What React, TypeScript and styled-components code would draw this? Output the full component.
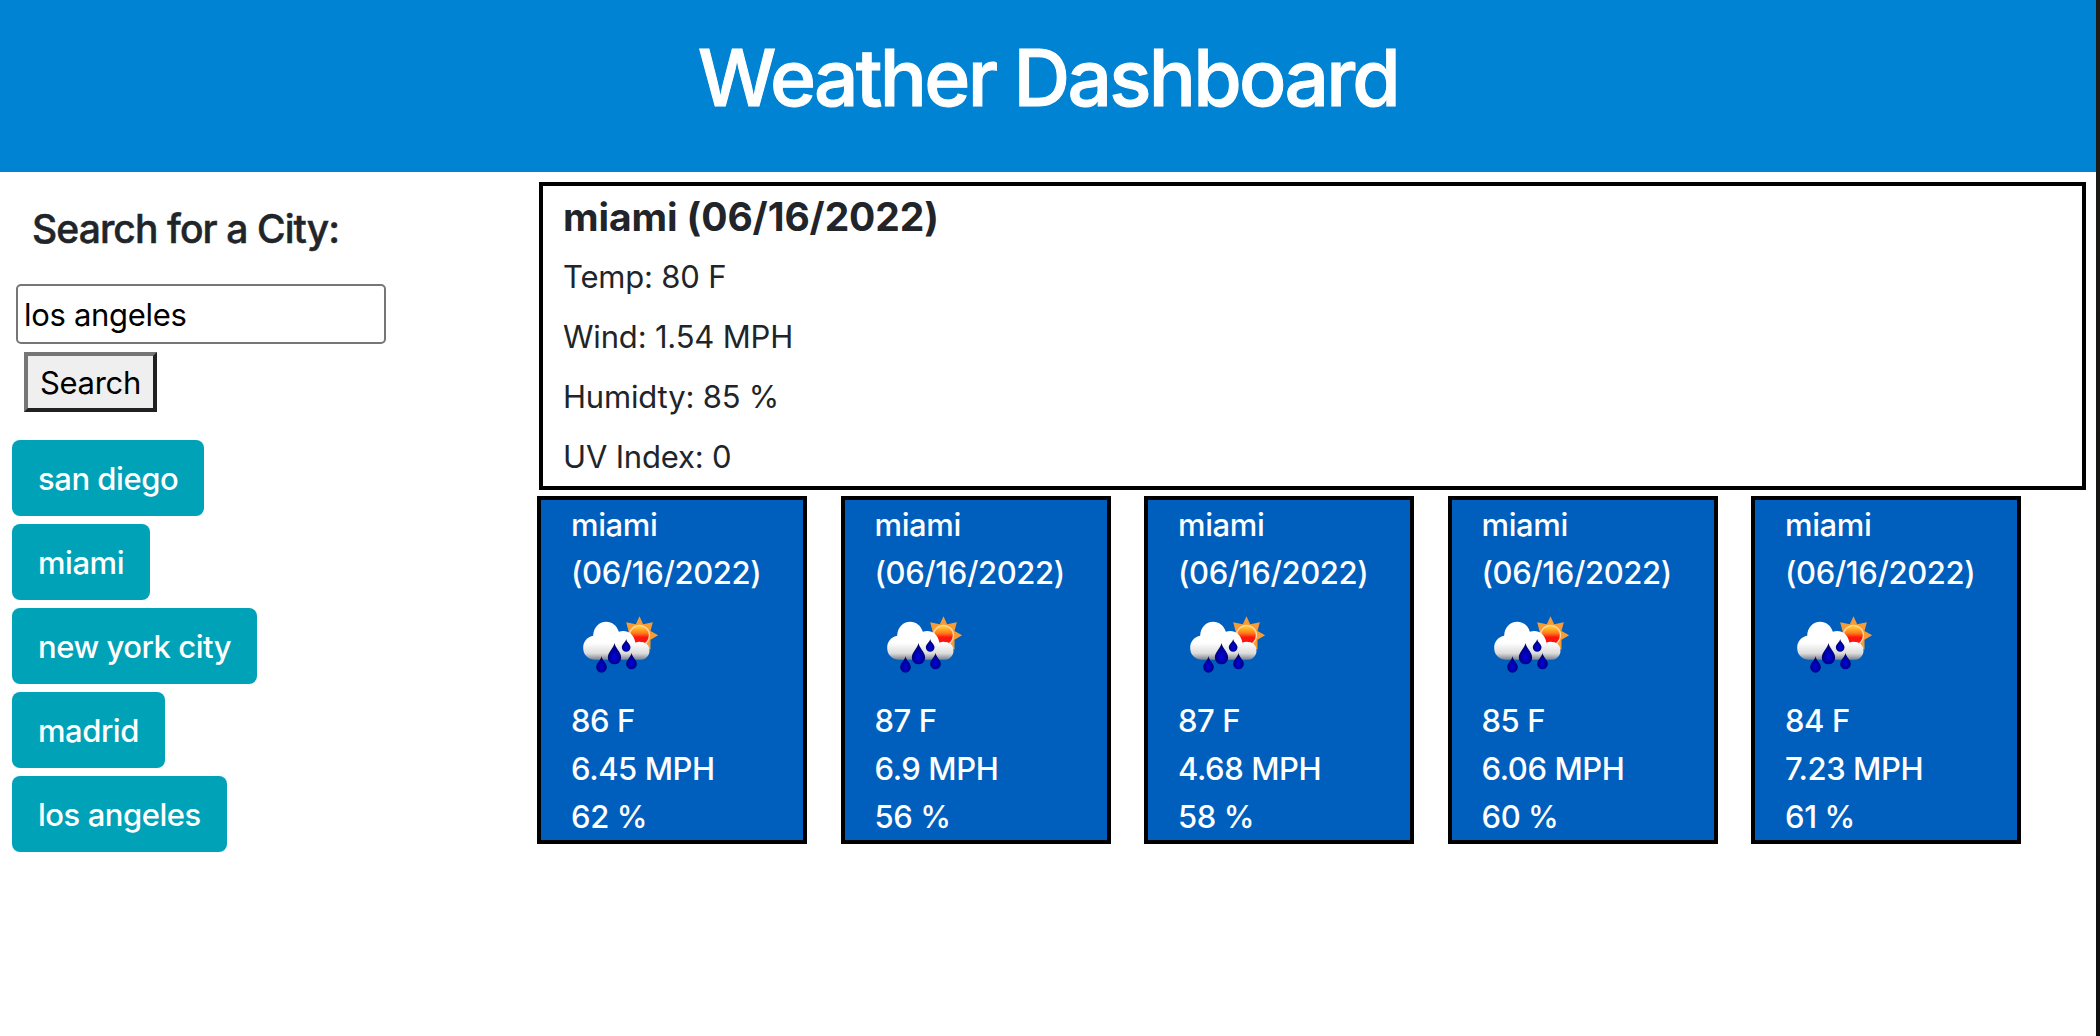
import React, { useState } from 'react';
import styled, { createGlobalStyle } from 'styled-components';

const GlobalStyle = createGlobalStyle`
  *, *::before, *::after { box-sizing: border-box; }
  body {
    margin: 0;
    background: #fff;
    color: #212529;
    font-family: Inter, "Liberation Sans", sans-serif;
    font-size: 31px;
    line-height: 48px;
  }
`;

const Screen = styled.div`
  display: flex;
  height: 1036px;
  overflow: hidden;
`;

const Page = styled.div`
  flex: 1;
  min-width: 0;
`;

const WindowEdge = styled.div`
  width: 4px;
  background: linear-gradient(#1f1c18, #151515 60%, #101010);
`;

const Header = styled.header`
  height: 172px;
  padding-top: 30px;
  background: #0083d3;
  color: #fff;
  text-align: center;
`;

const Title = styled.h1`
  margin: 0;
  font-size: 78.5px;
  font-weight: 500;
  line-height: 96px;
  letter-spacing: -2.75px;
  -webkit-text-stroke: 1px currentColor;
`;

const Columns = styled.div`
  display: flex;
`;

const Sidebar = styled.aside`
  width: 537px;
  padding: 32px 12px 0;
`;

const SearchForm = styled.form`
  display: flex;
  flex-direction: column;
  align-items: flex-start;
`;

const SearchLabel = styled.label`
  margin: 0 0 30px 20px;
  font-size: 39px;
  font-weight: 500;
  line-height: 50px;
  letter-spacing: -0.9px;
  -webkit-text-stroke: 0.5px currentColor;
`;

const CityInput = styled.input`
  width: 370px;
  height: 60px;
  margin-left: 4px;
  padding: 3px 6px 2px;
  border: 2px solid #767676;
  border-radius: 5px;
  outline: none;
  color: #000;
  font: inherit;
  letter-spacing: -0.3px;
`;

const SearchButton = styled.button`
  width: 133px;
  height: 60px;
  margin: 8px 0 0 12px;
  padding: 2px 0 0;
  border: 4px solid;
  border-color: #767676 #212121 #212121 #767676;
  background: #efefef;
  color: #000;
  font: inherit;
  letter-spacing: -0.3px;
`;

const History = styled.div`
  display: flex;
  flex-direction: column;
  align-items: flex-start;
  gap: 8px;
  margin-top: 28px;
`;

const CityButton = styled.button`
  height: 76px;
  padding: 2px 26px 0;
  border: 0;
  border-radius: 8px;
  background: #00a2b8;
  color: #fff;
  font: inherit;
  font-weight: 500;
  letter-spacing: -0.46px;
`;

const Main = styled.main`
  flex: 1;
  padding-top: 10px;
`;

const Current = styled.section`
  height: 308px;
  margin: 0 10px 6px 2px;
  padding: 3px 20px 0;
  border: 4px solid #000;
`;

const CurrentTitle = styled.h2`
  margin: 0 0 8px;
  font-size: 39px;
  font-weight: 700;
  line-height: 56px;
  letter-spacing: -0.1px;
`;

const Reading = styled.p`
  margin: 0 0 12px;
  letter-spacing: -0.18px;
`;

const Forecast = styled.section`
  display: flex;
  gap: 33.5px;
`;

const DayCard = styled.article`
  width: 270px;
  height: 348px;
  padding: 1px 0 0 30px;
  border: 4px solid #000;
  background: #005ebd;
  color: #fff;
  font-weight: 500;
  letter-spacing: -0.4px;
`;

const DayIcon = styled.svg`
  display: block;
  width: 100px;
  height: 100px;
`;

function RainIcon({ id }: { id: number }) {
  return (
    <DayIcon viewBox="0 0 100 100">
      <defs>
        <linearGradient id={`sun${id}`} x1="0" y1="0" x2="0" y2="1">
          <stop offset="0.08" stopColor="#ffc933" />
          <stop offset="0.4" stopColor="#ff7818" />
          <stop offset="0.6" stopColor="#fb1710" />
          <stop offset="1" stopColor="#ff0d0d" />
        </linearGradient>
        <linearGradient id={`cloud${id}`} gradientUnits="userSpaceOnUse" x1="0" y1="64" x2="0" y2="181">
          <stop offset="0.55" stopColor="#fff" />
          <stop offset="0.82" stopColor="#dcdcdc" />
          <stop offset="1" stopColor="#737b88" />
        </linearGradient>
        <radialGradient id={`drop${id}`} cx="0.5" cy="0.65" r="0.55">
          <stop offset="0.1" stopColor="#0404d6" />
          <stop offset="0.55" stopColor="#0000a4" />
          <stop offset="1" stopColor="#05055c" />
        </radialGradient>
      </defs>
      <g transform="translate(-1.5 3) scale(0.33333)">
        <path
          fill="#f79b35"
          d="M210 49L221 73L250 67L243 93L266 106L243 119L243 149L223 138L210 152L180 120L177 93L170 67L199 73Z"
        />
        <circle cx="210" cy="106" r="30" fill={`url(#sun${id})`} stroke="#ffd9a0" strokeWidth="4" />
        <path
          fill={`url(#cloud${id})`}
          d="M74 179C53 177 41 162 41 143c0-19 13-33 30-36 1-25 17-42 39-42 18 0 32 11 38 30 22-7 44 3 50 33 7-4 16-3 24-1 12 4 18 13 18 25 0 13-10 27-26 27z"
        />
        <path fill={`url(#drop${id})`} d="M135 129c3 17 20 26 20 44a20 20 0 0 1-40 0c0-18 17-27 20-44z" />
        <path fill={`url(#drop${id})`} d="M170 117c2 11 13 15 13 25a13 13 0 0 1-26 0c0-10 11-14 13-25z" />
        <path fill={`url(#drop${id})`} d="M96 168c2 14 16 20 16 34a16 16 0 0 1-32 0c0-14 14-20 16-34z" />
        <path fill={`url(#drop${id})`} d="M186 158c2 14 16 20 16 34a16 16 0 0 1-32 0c0-14 14-20 16-34z" />
      </g>
    </DayIcon>
  );
}

const cities = ['san diego', 'miami', 'new york city', 'madrid', 'los angeles'];
const readings = ['Temp: 80 F', 'Wind: 1.54 MPH', 'Humidty: 85 %', 'UV Index: 0'];
const days = [
  { temp: 86, wind: 6.45, humidity: 62 },
  { temp: 87, wind: 6.9, humidity: 56 },
  { temp: 87, wind: 4.68, humidity: 58 },
  { temp: 85, wind: 6.06, humidity: 60 },
  { temp: 84, wind: 7.23, humidity: 61 },
];

export default function App() {
  const [query, setQuery] = useState('los angeles');
  return (
    <Screen>
      <GlobalStyle />
      <Page>
        <Header>
          <Title>Weather Dashboard</Title>
        </Header>
        <Columns>
          <Sidebar>
            <SearchForm onSubmit={(e) => e.preventDefault()}>
              <SearchLabel htmlFor="city">Search for a City:</SearchLabel>
              <CityInput id="city" value={query} onChange={(e) => setQuery(e.target.value)} />
              <SearchButton>Search</SearchButton>
            </SearchForm>
            <History>
              {cities.map((city) => (
                <CityButton key={city}>{city}</CityButton>
              ))}
            </History>
          </Sidebar>
          <Main>
            <Current>
              <CurrentTitle>miami (06/16/2022)</CurrentTitle>
              {readings.map((text) => (
                <Reading key={text}>{text}</Reading>
              ))}
            </Current>
            <Forecast>
              {days.map((day, i) => (
                <DayCard key={i}>
                  <div>miami</div>
                  <div>(06/16/2022)</div>
                  <RainIcon id={i} />
                  <div>{day.temp} F</div>
                  <div>{day.wind} MPH</div>
                  <div>{day.humidity} %</div>
                </DayCard>
              ))}
            </Forecast>
          </Main>
        </Columns>
      </Page>
      <WindowEdge />
    </Screen>
  );
}
